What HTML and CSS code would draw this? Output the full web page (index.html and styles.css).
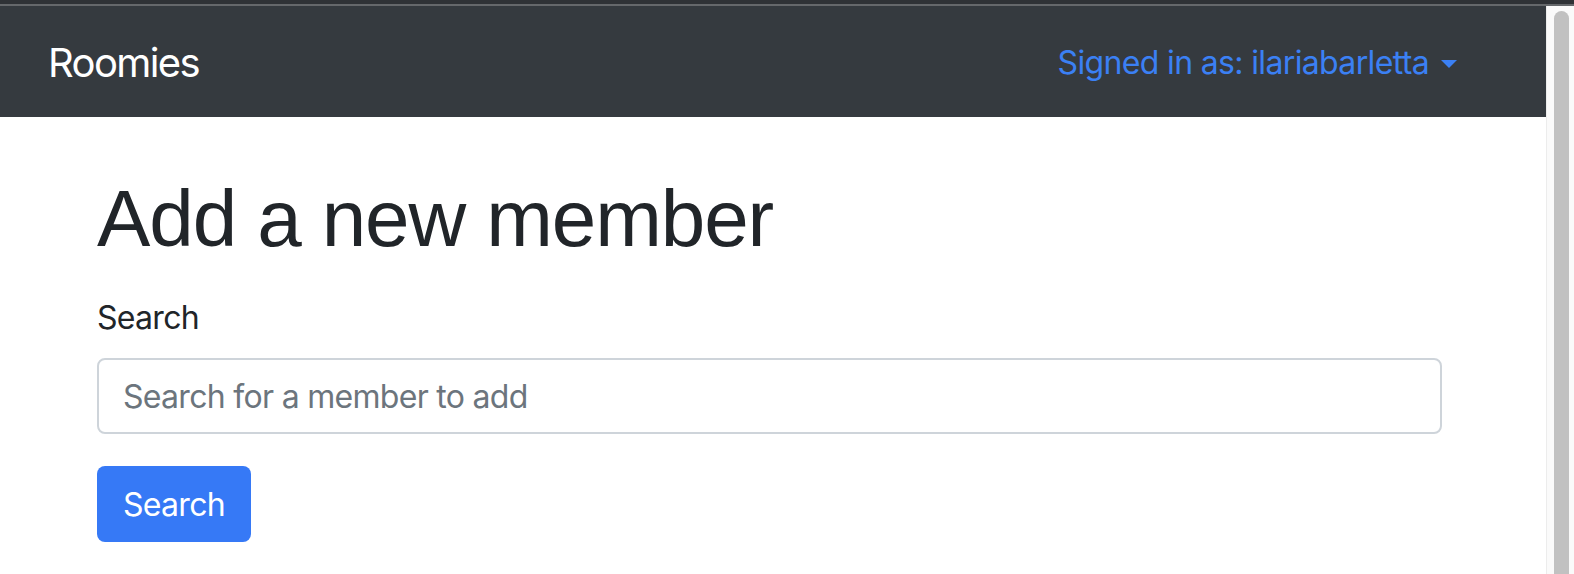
FILE: index.html
```html
<!DOCTYPE html>
<html lang="en">
<head>
<meta charset="utf-8">
<title>Roomies</title>
<link rel="stylesheet" href="styles.css">
</head>
<body>
<div class="chrome-strip"></div>
<div class="window">
  <div class="page">
    <nav class="navbar">
      <a class="brand" href="#">Roomies</a>
      <a class="user-link" href="#">Signed in as: ilariabarletta<span class="caret"></span></a>
    </nav>
    <main class="content">
      <h1 class="title">Add a new member</h1>
      <form class="search-form">
        <div class="form-group">
          <label class="label" for="q">Search</label>
          <input class="input" id="q" type="text" placeholder="Search for a member to add">
        </div>
        <button class="btn" type="button">Search</button>
      </form>
    </main>
  </div>
  <div class="scrollbar"><div class="thumb"></div></div>
</div>
</body>
</html>
```
FILE: styles.css
```css
* { box-sizing: border-box; }
html, body { margin: 0; padding: 0; height: 100%; overflow: hidden; }
body {
  font-family: Inter, "Noto Sans", sans-serif;
  color: #212529;
  background: #ffffff;
  display: flex;
  flex-direction: column;
}
.chrome-strip {
  height: 6px;
  background: #2f3236;
  border-bottom: 2px solid #65686b;
  flex: none;
}
.window {
  flex: 1;
  display: flex;
  min-height: 0;
}
.page {
  flex: 1;
  display: flex;
  flex-direction: column;
}
.navbar {
  height: 111px;
  background: #353a3f;
  display: flex;
  align-items: center;
  justify-content: space-between;
  padding: 2px 89px 0 48px;
}
.brand {
  color: #ffffff;
  font-size: 40px;
  text-decoration: none;
  letter-spacing: -1.6px;
}
.user-link {
  color: #3b80f4;
  font-size: 32px;
  text-decoration: none;
  display: flex;
  align-items: center;
  letter-spacing: -0.65px;
}
.caret {
  display: inline-block;
  width: 0;
  height: 0;
  margin-left: 12px;
  border-top: 8px solid #3b80f4;
  border-left: 8px solid transparent;
  border-right: 8px solid transparent;
  margin-top: 2px;
}
.content {
  padding: 54px 0 0 97px;
  width: 1442px;
}
.title {
  font-family: "Liberation Sans", Arial, sans-serif;
  font-weight: 400;
  font-size: 80px;
  line-height: 96px;
  margin: 0 0 27px 0;
  letter-spacing: -1.1px;
}
.form-group { margin-bottom: 32px; }
.label {
  display: block;
  font-size: 32px;
  line-height: 48px;
  margin-bottom: 16px;
  letter-spacing: -0.7px;
}
.input {
  display: block;
  width: 100%;
  height: 76px;
  padding: 0 24px;
  font-family: Inter, "Noto Sans", sans-serif;
  font-size: 32px;
  letter-spacing: -0.7px;
  color: #495057;
  border: 2px solid #ced4da;
  border-radius: 8px;
  background: #fff;
  outline: none;
}
.input::placeholder { color: #6c757d; opacity: 1; }
.btn {
  height: 76px;
  padding: 0 26px;
  font-family: Inter, "Noto Sans", sans-serif;
  font-size: 32px;
  letter-spacing: -0.7px;
  color: #ffffff;
  background: #3679f6;
  border: none;
  border-radius: 8px;
}
.scrollbar {
  width: 28px;
  flex: none;
  background: #fafafa;
  border-left: 1px solid #ececec;
  padding: 5px 0 0 7px;
}
.thumb {
  width: 15px;
  height: 100%;
  background: #c1c1c1;
  border-radius: 8px 8px 0 0;
}
```
